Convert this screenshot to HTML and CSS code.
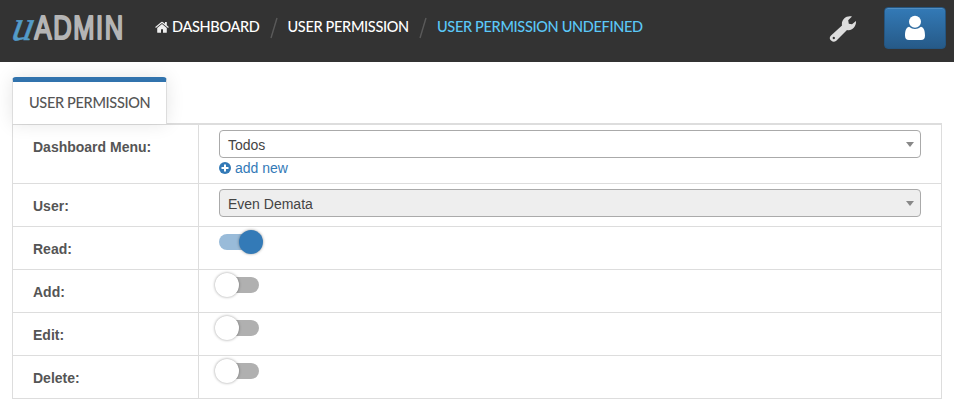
FILE: index.html
```html
<!DOCTYPE html>
<html lang="en">
<head>
<meta charset="utf-8">
<title>uAdmin</title>
<link rel="stylesheet" href="styles.css">
</head>
<body>
<header class="topbar">
  <svg class="logo" width="124" height="54" viewBox="0 0 124 54">
    <text class="logo-u" transform="translate(1 40) skewX(-20)" x="0" y="0" textLength="21" lengthAdjust="spacingAndGlyphs">u</text>
    <text class="logo-name" transform="translate(26.500 39) scale(.75 1)" x="0" y="0">ADMIN</text>
  </svg>
  <nav class="crumbs">
    <a class="crumb home"><svg class="house" width="14" height="12" viewBox="0 0 14 12"><path d="M7 3 2.2 7v4.2q0 .6.6.6H6V8.3h2v3.5h3.2q.6 0 .6-.6V7z"/><path d="M10 1h1.8v3.3L13.8 6l-.7.9L7 1.9.9 6.9.2 6 6.3.9q.7-.5 1.4 0L10 2.8z"/></svg><span>DASHBOARD</span></a>
    <svg class="slash" width="8" height="22" viewBox="0 0 8 22"><path d="M7 1 1 21"/></svg>
    <a class="crumb t-perm">USER PERMISSION</a>
    <svg class="slash" width="8" height="22" viewBox="0 0 8 22"><path d="M7 1 1 21"/></svg>
    <a class="crumb current">USER PERMISSION UNDEFINED</a>
  </nav>
  <svg class="wrench" width="28" height="28" viewBox="0 0 28 28"><path fill-rule="evenodd" d="M13 10.500C12 5 17 .2 23 1.600L19.200 5.200 19.800 8.700 23 9.300 27 6C27.500 12 22.500 16.300 18 15L7.300 25.700Q4.700 27.800 2.400 25.800L1.500 24.900Q-.2 22.800 2 20.500ZM4.800 21.800a1.200 1.200 0 1 0 .01 0Z"/></svg>
  <button class="user-btn" aria-label="Account"><svg width="20" height="26" viewBox="0 0 20 26"><path d="M4 11.700Q10 16.500 16 11.700C19 12.500 20 16 20 20.500Q20 25 16 25H4Q0 25 0 20.500C0 16 1 12.500 4 11.700Z"/><circle cx="10" cy="6.800" r="6"/></svg></button>
</header>
<main class="page">
  <div class="tabs"><div class="tab"><span class="tab-label">USER PERMISSION</span></div></div>
  <div class="form">
    <div class="row tall"><div class="label">Dashboard Menu:</div><div class="field"><div class="select">Todos<i class="caret"></i></div><a class="add"><svg width="12" height="12" viewBox="0 0 12 12"><circle cx="6" cy="6" r="6"/><path d="M6 2.500v7M2.500 6h7"/></svg>add new</a></div></div>
    <div class="row"><div class="label">User:</div><div class="field"><div class="select disabled">Even Demata<i class="caret"></i></div></div></div>
    <div class="row"><div class="label">Read:</div><div class="field"><div class="switch on"><i class="knob"></i></div></div></div>
    <div class="row"><div class="label">Add:</div><div class="field"><div class="switch"><i class="knob"></i></div></div></div>
    <div class="row"><div class="label">Edit:</div><div class="field"><div class="switch"><i class="knob"></i></div></div></div>
    <div class="row"><div class="label">Delete:</div><div class="field"><div class="switch"><i class="knob"></i></div></div></div>
  </div>
</main>
</body>
</html>
```
FILE: styles.css
```css
* { box-sizing: border-box; }
body { margin: 0; background: #fff; color: #444; font: 14px/20px "Liberation Sans", Arial, sans-serif; }
.topbar { display: flex; align-items: flex-start; height: 62px; background: #333; }
.logo { margin: 0 0 0 8px; flex: none; overflow: visible; }
.logo-u { font: 43px "Liberation Serif", serif; fill: #539bc8; stroke: #539bc8; stroke-width: .5px; }
.logo-name { font: 34px "Liberation Sans", sans-serif; letter-spacing: 2.2px; fill: #b5b5b5; stroke: #b5b5b5; stroke-width: 2.2px; stroke-linejoin: round; }
.crumbs { display: flex; align-items: center; height: 24px; margin: 15px 0 0 24px; }
.crumb { font: 500 14.5px/24px Lato, sans-serif; letter-spacing: -.33px; color: #fff; white-space: nowrap; }
.home { display: flex; align-items: center; width: 103px; }
.house { fill: #eee; margin: 0 3px 0 -1px; flex: none; }
.slash { fill: none; stroke: #5a5a5a; stroke-width: 1.4px; margin: 2px 10px 0 10.500px; flex: none; }
.t-perm { width: 121px; }
.current { color: #5bc8f8; }
.wrench { margin: 15px 0 0 auto; fill: #ddd; }
.user-btn { display: flex; justify-content: center; align-items: center; width: 62px; height: 42px; margin: 7px 8px 0 27px; padding: 0; border: 1px solid #245580; border-radius: 4px; background: linear-gradient(#337ab7, #265a88); box-shadow: inset 0 1px 0 rgba(255,255,255,.15); }
.user-btn svg { fill: #fff; }
.page { padding: 15px 12px 0; }
.tabs { display: flex; height: 47px; border-bottom: 1px solid #ddd; }
.tab { position: relative; width: 155px; height: 47px; padding: 9px 0 0 16px; border: 1px solid #ddd; border-top: 5px solid #3173ad; border-bottom: 0; border-radius: 4px 4px 0 0; background: #fff; box-shadow: 0 0 18px rgba(0,0,0,.1); }
.tab-label { font: 500 14.5px/24px Lato, sans-serif; letter-spacing: -.33px; color: #555; white-space: nowrap; }
.form { border: 1px solid #ddd; border-bottom: 0; width: 930px; }
.row { display: grid; grid-template-columns: 186px 1fr; height: 43px; border-bottom: 1px solid #ddd; }
.tall { height: 59px; }
.label { padding: 12px 0 0 20px; border-right: 1px solid #ddd; color: #555; font-weight: bold; }
.field { padding: 5px 20px 0; }
.select { display: flex; justify-content: space-between; align-items: center; height: 28px; padding: 2px 6px 0 8px; border: 1px solid #aaa; border-radius: 4px; color: #444; }
.disabled { background: #eee; }
.caret { border: solid transparent; border-width: 5px 4px 0; border-top-color: #888; margin-bottom: 2px; }
.add { display: flex; align-items: center; gap: 4px; color: #337ab7; }
.add svg { fill: #337ab7; }
.add path { stroke: #fff; stroke-width: 2px; }
.switch { position: relative; width: 40px; height: 16px; margin-top: 2px; border-radius: 8px; background: #b0b0b0; }
.knob { position: absolute; left: -4px; top: -4px; width: 24px; height: 24px; border-radius: 50%; background: #fff; box-shadow: 0 0 3px rgba(0,0,0,.4); }
.on { background: #99bbd9; }
.on .knob { left: 20px; background: #337ab7; }
```
